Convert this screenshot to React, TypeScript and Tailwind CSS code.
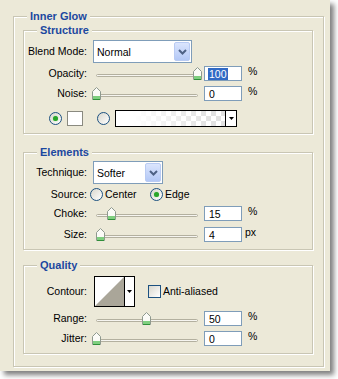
import React from "react";

// etched XP-style group frame
const frame = "border border-[#c9c6b4] shadow-[inset_1px_1px_0_#fff,1px_1px_0_#fff]";

const Legend: React.FC<{ children: React.ReactNode }> = ({ children }) => (
  <div className="-mt-[7px] ml-[13px] w-fit bg-[#ece9d8] px-[3px] text-[11px] font-bold leading-[13px] text-[#1c48a0]">
    {children}
  </div>
);

const Label: React.FC<{ children: React.ReactNode }> = ({ children }) => (
  <div className="w-[63px] shrink-0 text-right leading-[13px]">{children}</div>
);

const Chevron = () => (
  <svg width="9" height="6" viewBox="0 0 9 6">
    <path d="M1 1 L4.5 4.5 L8 1" stroke="#4d6185" strokeWidth="2" fill="none" />
  </svg>
);

const Select: React.FC<{ value: string; width: string }> = ({ value, width }) => (
  <div className={`ml-[6px] flex h-[23px] items-center border border-[#7f9db9] bg-white ${width}`}>
    <span className="flex-1 pl-[3px] pt-[2px]">{value}</span>
    <div className="mr-[1px] flex h-[19px] w-[16px] items-center justify-center rounded-[2px] border border-[#b9cbf3] bg-[linear-gradient(#dbe5fd,#b3c8f6)]">
      <Chevron />
    </div>
  </div>
);

const Thumb = () => (
  <svg width="9" height="13" viewBox="0 0 9 13">
    <path d="M0.5 12.5 V4.5 L4.5 0.5 L8.5 4.5 V12.5 Z" fill="#fbfbf7" stroke="#8e998e" />
    <rect x="1" y="9" width="7" height="3" fill="#7fcf7f" />
    <path d="M1 12.5 H8" stroke="#2f8f3a" />
  </svg>
);

const Slider: React.FC<{ pct: number }> = ({ pct }) => (
  <div className="relative ml-[6px] h-full w-[111px] shrink-0">
    <div className="absolute left-[3px] top-[8px] h-[3px] w-[102px] rounded-[2px] border border-[#b3b09f] bg-[#f6f5f0]" />
    <div className="absolute top-[1px]" style={{ left: 3 + pct * 1.01 - 4.5 }}>
      <Thumb />
    </div>
  </div>
);

const Field: React.FC<{ value: string; selected?: boolean }> = ({ value, selected }) => (
  <div className="flex h-[15px] w-[38px] shrink-0 items-center border border-[#7f9db9] bg-white pl-[3px]">
    <span className={selected ? "bg-[#316ac5] px-[1px] leading-[12px] text-white" : "pl-[1px] leading-[12px]"}>{value}</span>
  </div>
);

const SliderRow: React.FC<{ label: string; pct: number; value: string; unit: string; selected?: boolean; mt: string }> = ({ label, pct, value, unit, selected, mt }) => (
  <div className={`flex h-[15px] items-center ${mt}`}>
    <Label>{label}</Label>
    <Slider pct={pct} />
    <Field value={value} selected={selected} />
    <span className={`-mt-[1px] self-start leading-[13px] ${unit === "%" ? "ml-[6px]" : "ml-[3px]"}`}>{unit}</span>
  </div>
);

const Radio: React.FC<{ checked?: boolean }> = ({ checked }) => (
  <div className="flex h-[13px] w-[13px] shrink-0 items-center justify-center rounded-full border border-[#1c5180] bg-[linear-gradient(135deg,#d9d7cd,#ffffff)]">
    {checked && <div className="h-[5px] w-[5px] rounded-full bg-[#2aa52a] shadow-[0_0_1px_#6fd46f]" />}
  </div>
);

const DownArrow = () => (
  <svg width="5" height="3" viewBox="0 0 5 3">
    <path d="M0 0 H5 L2.5 3 Z" fill="#000" />
  </svg>
);

export default function App() {
  return (
    <div className="h-[379px] w-[338px] overflow-hidden bg-white font-['Liberation_Sans',Arial,sans-serif] text-[10.5px] text-black">
      <div className="h-[371px] w-[330px] overflow-hidden bg-[#ece9d8] pl-[13px] pt-[16px] shadow-[4px_4px_5px_rgba(0,0,0,0.5)]">
        <div className={`h-[351px] w-[311px] ${frame}`}>
          <Legend>Inner Glow</Legend>

          {/* Structure */}
          <div className={`ml-[9px] mt-[7px] h-[104px] w-[290px] ${frame}`}>
            <Legend>Structure</Legend>
            <div className="mt-[3px] flex h-[23px] items-center">
              <Label>Blend Mode:</Label>
              <Select value="Normal" width="w-[99px]" />
            </div>
            <SliderRow label="Opacity:" pct={100} value="100" unit="%" selected mt="mt-[3px]" />
            <SliderRow label="Noise:" pct={0} value="0" unit="%" mt="mt-[5px]" />
            <div className="mt-[9px] flex h-[17px] items-center">
              <div className="ml-[25px]">
                <Radio checked />
              </div>
              <div className="ml-[5px] h-[15px] w-[16px] border border-[#8a8a80] bg-white" />
              <div className="ml-[14px]">
                <Radio />
              </div>
              <div className="ml-[5px] flex h-[17px] w-[122px] border border-black bg-white">
                <div className="h-full flex-1 bg-[conic-gradient(#e2e2e2_25%,#ffffff_0_50%,#e2e2e2_0_75%,#ffffff_0)] bg-[length:10px_10px]">
                  <div className="h-full w-full bg-[linear-gradient(to_right,#ffffff_15%,rgba(255,255,255,0)_85%)]" />
                </div>
                <div className="flex w-[11px] items-center justify-center border-l border-black bg-white">
                  <DownArrow />
                </div>
              </div>
            </div>
          </div>

          {/* Elements */}
          <div className={`ml-[9px] mt-[18px] h-[98px] w-[290px] ${frame}`}>
            <Legend>Elements</Legend>
            <div className="mt-[2px] flex h-[23px] items-center">
              <Label>Technique:</Label>
              <Select value="Softer" width="w-[70px]" />
            </div>
            <div className="mt-[4px] flex h-[13px] items-center">
              <Label>Source:</Label>
              <div className="ml-[3px]">
                <Radio />
              </div>
              <span className="ml-[2px] w-[45px] leading-[13px]">Center</span>
              <Radio checked />
              <span className="ml-[2px] leading-[13px]">Edge</span>
            </div>
            <SliderRow label="Choke:" pct={15} value="15" unit="%" mt="mt-[5px]" />
            <SliderRow label="Size:" pct={4.5} value="4" unit="px" mt="mt-[6px]" />
          </div>

          {/* Quality */}
          <div className={`ml-[9px] mt-[15px] h-[89px] w-[290px] ${frame}`}>
            <Legend>Quality</Legend>
            <div className="mt-[4px] flex h-[31px] items-center">
              <Label>Contour:</Label>
              <div className="ml-[7px] flex h-[31px] w-[41px] border border-black bg-white">
                <svg width="29" height="29" viewBox="0 0 29 29" className="shrink-0">
                  <path d="M0 29 L29 0 V29 Z" fill="#aaa699" />
                </svg>
                <div className="flex flex-1 items-center justify-center border-l border-black">
                  <DownArrow />
                </div>
              </div>
              <div className="ml-[13px] h-[13px] w-[13px] border border-[#1c5180] bg-[linear-gradient(135deg,#d9d7cd,#ffffff)]" />
              <span className="ml-[2px] leading-[13px]">Anti-aliased</span>
            </div>
            <SliderRow label="Range:" pct={50} value="50" unit="%" mt="mt-[4px]" />
            <SliderRow label="Jitter:" pct={0} value="0" unit="%" mt="mt-[5px]" />
          </div>
        </div>
      </div>
    </div>
  );
}
